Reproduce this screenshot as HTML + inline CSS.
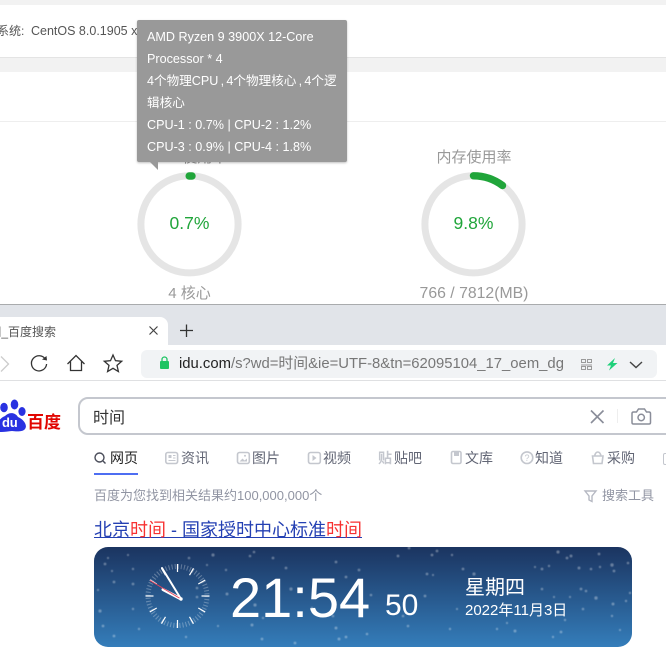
<!DOCTYPE html>
<html>
<head>
<meta charset="utf-8">
<style>
html,body{margin:0;padding:0;background:#fff}
body{width:666px;height:658px;position:relative;overflow:hidden;font-family:"Liberation Sans","Noto Sans CJK SC",sans-serif}
.a{position:absolute}
.t{position:absolute;white-space:nowrap;line-height:20px}
svg{position:absolute;overflow:visible}
.nav{position:absolute;top:448px;line-height:20px;font-size:14px;color:#626675;white-space:nowrap}
</style>
</head>
<body>
<div class="a" style="left:0;top:0;width:666px;height:5px;background:#f2f2f2"></div>
<div class="a" style="left:0;top:57px;width:666px;height:15px;background:#f2f2f2;border-top:1px solid #e4e4e4;box-sizing:border-box"></div>
<div class="a" style="left:0;top:121px;width:666px;height:1px;background:#eee"></div>
<div class="t" style="left:-3px;top:21px;font-size:12px;color:#555">系统:</div>
<div class="t" style="left:31px;top:21px;font-size:12.5px;color:#555">CentOS 8.0.1905 x86</div>

<div class="t" style="left:89px;top:148px;width:200px;text-align:center;font-size:15px;color:#999">CPU使用率</div>
<div class="t" style="left:374px;top:148px;width:200px;text-align:center;font-size:15px;color:#999">内存使用率</div>

<svg style="left:0;top:0" width="666" height="320">
<circle cx="189.5" cy="224.3" r="48.6" fill="none" stroke="#e5e5e5" stroke-width="7"/>
<circle cx="473.5" cy="224.3" r="48.6" fill="none" stroke="#e5e5e5" stroke-width="7"/>
<path d="M189.2 176 L192 176" fill="none" stroke="#20a53a" stroke-width="7.4" stroke-linecap="round"/>
<path d="M473.5 175.8 A48.6 48.6 0 0 1 502.5 185.5" fill="none" stroke="#20a53a" stroke-width="7.4" stroke-linecap="round"/>
</svg>
<div class="t" style="left:89.5px;top:213px;width:200px;text-align:center;font-size:17.5px;color:#20a53a">0.7%</div>
<div class="t" style="left:373.5px;top:213px;width:200px;text-align:center;font-size:17.5px;color:#20a53a">9.8%</div>
<div class="t" style="left:89.5px;top:284px;width:200px;text-align:center;font-size:15px;color:#999">4 核心</div>
<div class="t" style="left:374px;top:284px;width:200px;text-align:center;font-size:15.8px;color:#999">766 / 7812(MB)</div>

<div class="a" style="left:137px;top:20px;width:210px;height:142px;background:#999;border-radius:2px;box-shadow:0 1px 2px rgba(0,0,0,.25)"></div>
<svg style="left:0;top:0" width="200" height="200"><path d="M150 162 L158 162 L158 170 Z" fill="#999"/></svg>
<div class="t" style="left:147px;top:26px;font-size:12.6px;line-height:22px;color:#fff">AMD Ryzen 9 3900X 12-Core<br>Processor * 4<br><span style="word-spacing:-1.25px">4个物理CPU , 4个物理核心 , 4个逻</span><br>辑核心<br>CPU-1 : 0.7% | CPU-2 : 1.2%<br>CPU-3 : 0.9% | CPU-4 : 1.8%</div>

<!-- browser -->
<div class="a" style="left:0;top:304px;width:666px;height:1px;background:#a9abad"></div>
<div class="a" style="left:0;top:305px;width:666px;height:40px;background:#e1e4e9"></div>
<div class="a" style="left:0;top:317px;width:168px;height:28px;background:#fff;border-top-right-radius:8px"></div>
<div class="t" style="right:610px;top:322px;font-size:12px;color:#555">时间_百度搜索</div>
<svg style="left:0;top:0" width="666" height="400">
<path d="M149.5 326.5 L157.5 334.5 M157.5 326.5 L149.5 334.5" stroke="#444" stroke-width="1.2" fill="none"/>
<path d="M180 330.5 H193 M186.5 324.5 V337" stroke="#333" stroke-width="1.3" fill="none"/>
<path d="M1 356.5 L8.5 364 L1 371.5" stroke="#ccc" stroke-width="1.3" fill="none"/>
<path d="M45.6 359.5 A7.6 7.6 0 1 0 46.6 364" stroke="#333" stroke-width="1.3" fill="none"/>
<path d="M42 359.5 L47 360.5 L46.5 356 Z" fill="#333"/>
<path d="M67.5 364 L76 355.5 L84.5 364 M70.5 361.5 V370.5 H81.5 V361.5" stroke="#333" stroke-width="1.3" fill="none"/>
<path d="M113 355 L115.5 360.7 L121.7 361.3 L117 365.4 L118.4 371.5 L113 368.3 L107.6 371.5 L109 365.4 L104.3 361.3 L110.5 360.7 Z" stroke="#333" stroke-width="1.3" fill="none"/>
</svg>
<div class="a" style="left:141px;top:350px;width:516px;height:28px;background:#f1f3f5;border-radius:6px"></div>
<div class="a" style="left:0;top:380px;width:666px;height:1px;background:#dfe0e2"></div>
<svg style="left:0;top:0" width="666" height="400">
<rect x="160" y="361" width="9" height="8" rx="1" fill="#1ec463"/>
<path d="M162 361.5 V359.5 A2.5 2.5 0 0 1 167 359.5 V361.5" stroke="#1ec463" stroke-width="1.3" fill="none"/>
<g fill="none" stroke="#9a9a9a" stroke-width="1">
<rect x="581.5" y="359.5" width="4" height="3"/><rect x="587.5" y="359.5" width="4" height="3"/>
<path d="M581 365 H592"/>
<rect x="581.5" y="366.5" width="4" height="3"/><rect x="587.5" y="366.5" width="4" height="3"/>
</g>
<path d="M615 358 L607 365.5 L611 365.5 L609 370.5 L617.5 363 L613 363 Z" fill="#1fd07a"/>
<path d="M630 362 L636 367.5 L642 362" stroke="#444" stroke-width="1.4" fill="none"/>
</svg>
<div class="t" style="left:179px;top:354px;font-size:14.85px;color:#777"><span style="color:#222">idu.com</span>/s?wd=时间&amp;ie=UTF-8&amp;tn=62095104_17_oem_dg</div>

<!-- baidu logo -->
<svg style="left:0;top:0" width="70" height="440">
<g fill="#2932e1">
<ellipse cx="4" cy="407.500" rx="3.800" ry="4.800"/>
<ellipse cx="14.500" cy="404.500" rx="3.800" ry="5"/>
<ellipse cx="22" cy="411.500" rx="3.600" ry="4.500"/>
<path d="M-3 431 C-5 424 0 418 5 416 C9 412 15 412 18 417 C23 419 28 425 25 429 C23 432 16 431.500 12 431 C7 431.500 -1 433 -3 431 Z"/>
</g>
</svg>
<div class="t" style="left:2px;top:413px;font-size:13px;font-weight:bold;color:#fff;letter-spacing:-.2px">du</div>
<div class="t" style="left:27px;top:411px;font-size:17px;font-weight:bold;color:#e10601;font-family:'Noto Sans CJK SC',sans-serif">百度</div>

<!-- search box -->
<div class="a" style="left:78px;top:397px;width:640px;height:38px;border:2px solid #c4c7ce;border-radius:10px;box-sizing:border-box;background:#fff"></div>
<div class="t" style="left:93px;top:409px;font-size:16px;color:#333">时间</div>
<svg style="left:0;top:0" width="666" height="480">
<path d="M591 410.5 L603.5 423 M603.5 410.5 L591 423" stroke="#8a8d99" stroke-width="1.6" fill="none"/>
<path d="M617.5 409 V423" stroke="#eee" stroke-width="1"/>
<path d="M633.5 412 H636.5 L638.5 409 H644.5 L646.5 412 H649 Q650.5 412 650.5 413.5 V422.5 Q650.5 424 649 424 H633.5 Q632 424 632 422.5 V413.5 Q632 412 633.5 412 Z" stroke="#8a8d99" stroke-width="1.5" fill="none"/>
<circle cx="641.2" cy="417.5" r="3.2" stroke="#8a8d99" stroke-width="1.5" fill="none"/>

<!-- nav icons -->
<circle cx="99.5" cy="457.5" r="4.5" stroke="#4a4d5a" stroke-width="1.4" fill="none"/>
<path d="M103 461 L105.500 463.500" stroke="#4a4d5a" stroke-width="1.4"/>
<g stroke="#c4c7ce" stroke-width="1.6" fill="none">
<rect x="165.800" y="452.500" width="11.800" height="11" rx="2"/>
<path d="M173 455.500 H175.500 M173 458 H175.500 M168.500 460.500 H175.500" stroke-width="1"/>
<rect x="237.500" y="452.500" width="11.800" height="11" rx="2"/>
<rect x="308.500" y="452.500" width="11.800" height="11" rx="2"/>
<rect x="451.500" y="451.500" width="9.500" height="12" rx="1.500"/>
<circle cx="527" cy="457.700" r="5.800"/>
<path d="M592.500 456 H603 L602 463.500 H593.500 Z M594.800 456 A3 4 0 0 1 600.800 456"/>
</g>
<rect x="168.500" y="455" width="3" height="3" fill="#c4c7ce"/>
<path d="M239.500 461.500 L242.500 458.500 L244.500 460.500 L247 458.500 V461.500 Z" fill="#c4c7ce"/>
<circle cx="245" cy="455.800" r="1" fill="#c4c7ce"/>
<path d="M312.500 455 L316.500 458 L312.500 461 Z" fill="#c4c7ce"/>
<path d="M454 452 H459 V456 H454 Z" fill="#c4c7ce"/>
<text x="527" y="461" font-size="9" text-anchor="middle" fill="#c4c7ce" font-family="Liberation Sans">?</text>
<path d="M585 491 H596 L592 496 V501.500 L589 500 V496 Z" stroke="#b5b8c2" stroke-width="1.4" fill="none"/>
</svg>
<div class="t" style="left:378px;top:448px;font-size:14px;color:#c4c7ce;font-weight:bold">贴</div>
<div class="nav" style="left:110px;color:#222">网页</div>
<div class="nav" style="left:181px">资讯</div>
<div class="nav" style="left:252px">图片</div>
<div class="nav" style="left:323px">视频</div>
<div class="nav" style="left:394px">贴吧</div>
<div class="nav" style="left:465px">文库</div>
<div class="nav" style="left:535px">知道</div>
<div class="nav" style="left:607px">采购</div>
<div class="a" style="left:663px;top:453px;width:8px;height:10px;border:1.4px solid #c4c7ce;border-radius:2px"></div>
<div class="a" style="left:94px;top:473px;width:44px;height:2px;background:#4e6ef2"></div>
<div class="t" style="left:94px;top:486px;font-size:13px;color:#9195a3">百度为您找到相关结果约100,000,000个</div>
<div class="t" style="left:602px;top:486px;font-size:13px;color:#9195a3">搜索工具</div>
<div class="t" style="left:94px;top:519px;font-size:18px;line-height:22px;color:#2440b3;text-decoration:underline;text-decoration-thickness:1px;text-underline-offset:1px">北京<span style="color:#f73131">时间</span> - 国家授时中心标准<span style="color:#f73131">时间</span></div>

<!-- time card -->
<div class="a" style="left:94px;top:547px;width:538px;height:100px;border-radius:14px;background:linear-gradient(#1b3460,#347dba)"></div>
<svg style="left:0;top:0" width="666" height="658">
<defs><filter id="b" x="-5%" y="-5%" width="110%" height="110%"><feGaussianBlur stdDeviation="0.5"/></filter></defs>
<g fill="#fff" opacity=".32" filter="url(#b)">
<circle cx="213" cy="555" r="1.6"/><circle cx="189" cy="558" r="1.3"/><circle cx="254" cy="552" r="1.3"/><circle cx="250" cy="556" r="1.3"/><circle cx="105" cy="564" r="1.4"/><circle cx="133" cy="569" r="1.2"/><circle cx="114" cy="582" r="1.4"/><circle cx="133" cy="584" r="1.4"/><circle cx="100" cy="611" r="1.6"/><circle cx="103" cy="626" r="1.4"/><circle cx="114" cy="636" r="1.4"/><circle cx="133" cy="609" r="1.2"/><circle cx="139" cy="629" r="1.2"/><circle cx="226" cy="570" r="1.2"/><circle cx="286" cy="568" r="1.4"/><circle cx="336" cy="562" r="1.4"/><circle cx="359" cy="570" r="1.4"/><circle cx="346" cy="577" r="1.4"/><circle cx="273" cy="558" r="1.4"/><circle cx="227" cy="594" r="1.5"/><circle cx="255" cy="605" r="1.6"/><circle cx="291" cy="589" r="1.6"/><circle cx="263" cy="618" r="1.2"/><circle cx="312" cy="608" r="1.3"/><circle cx="333" cy="616" r="1.3"/><circle cx="371" cy="595" r="1.3"/><circle cx="252" cy="625" r="1.5"/><circle cx="336" cy="628" r="1.5"/><circle cx="346" cy="637" r="1.4"/><circle cx="339" cy="639" r="1.5"/><circle cx="367" cy="634" r="1.3"/><circle cx="262" cy="639" r="1.4"/><circle cx="295" cy="643" r="1.4"/><circle cx="186" cy="637" r="1.2"/><circle cx="197" cy="588" r="1.3"/><circle cx="197" cy="597" r="1.3"/><circle cx="207" cy="565" r="1.1"/><circle cx="108" cy="558" r="1.1"/><circle cx="128" cy="555" r="1.1"/><circle cx="112" cy="571" r="1.1"/><circle cx="98" cy="590" r="1.1"/><circle cx="218" cy="626" r="1.1"/>
<circle cx="398" cy="556" r="1.4"/><circle cx="432" cy="555" r="1.4"/><circle cx="437" cy="551" r="1.4"/><circle cx="452" cy="555" r="1.2"/><circle cx="409" cy="548" r="1.4"/><circle cx="463" cy="569" r="1.4"/><circle cx="474" cy="574" r="1.6"/><circle cx="427" cy="574" r="1.4"/><circle cx="433" cy="575" r="1.1"/><circle cx="425" cy="596" r="1.4"/><circle cx="558" cy="552" r="1.6"/><circle cx="571" cy="556" r="1.5"/><circle cx="567" cy="558" r="1.4"/><circle cx="599" cy="554" r="1.4"/><circle cx="612" cy="565" r="1.7"/><circle cx="628" cy="563" r="1.3"/><circle cx="614" cy="571" r="1.4"/><circle cx="579" cy="568" r="1.5"/><circle cx="591" cy="569" r="1.3"/><circle cx="600" cy="567" r="1.2"/><circle cx="542" cy="569" r="1.4"/><circle cx="535" cy="567" r="1.1"/><circle cx="549" cy="566" r="1.2"/><circle cx="542" cy="589" r="1.3"/><circle cx="581" cy="589" r="1.4"/><circle cx="586" cy="591" r="1.3"/><circle cx="596" cy="598" r="1.7"/><circle cx="613" cy="604" r="1.5"/><circle cx="626" cy="601" r="1.2"/><circle cx="630" cy="593" r="1.2"/><circle cx="583" cy="609" r="1.3"/><circle cx="570" cy="597" r="1.1"/><circle cx="554" cy="597" r="1.1"/><circle cx="565" cy="620" r="1.2"/><circle cx="612" cy="616" r="1.2"/><circle cx="620" cy="630" r="1.1"/><circle cx="561" cy="632" r="1.4"/><circle cx="553" cy="637" r="1.2"/><circle cx="515" cy="631" r="1.5"/><circle cx="497" cy="629" r="1.2"/><circle cx="450" cy="629" r="1.2"/><circle cx="408" cy="626" r="1.3"/><circle cx="403" cy="616" r="1.3"/><circle cx="507" cy="623" r="1.1"/><circle cx="457" cy="609" r="1.1"/>
</g>
<circle cx="177.500" cy="596" r="29.500" fill="none" stroke="#fff" stroke-opacity=".28" stroke-width="5" stroke-dasharray="1.1 1.99"/>
<g stroke="#fff" stroke-width="1.2">
<line x1="177.500" y1="564" x2="177.500" y2="572"/>
<line x1="177.500" y1="564" x2="177.500" y2="572" transform="rotate(30 177.500 596)"/>
<line x1="177.500" y1="564" x2="177.500" y2="572" transform="rotate(60 177.500 596)"/>
<line x1="177.500" y1="564" x2="177.500" y2="572" transform="rotate(90 177.500 596)"/>
<line x1="177.500" y1="564" x2="177.500" y2="572" transform="rotate(120 177.500 596)"/>
<line x1="177.500" y1="564" x2="177.500" y2="572" transform="rotate(150 177.500 596)"/>
<line x1="177.500" y1="564" x2="177.500" y2="572" transform="rotate(180 177.500 596)"/>
<line x1="177.500" y1="564" x2="177.500" y2="572" transform="rotate(210 177.500 596)"/>
<line x1="177.500" y1="564" x2="177.500" y2="572" transform="rotate(240 177.500 596)"/>
<line x1="177.500" y1="564" x2="177.500" y2="572" transform="rotate(270 177.500 596)"/>
<line x1="177.500" y1="564" x2="177.500" y2="572" transform="rotate(300 177.500 596)"/>
<line x1="177.500" y1="564" x2="177.500" y2="572" transform="rotate(330 177.500 596)"/>
</g>
<path d="M181 599 L162 568" stroke="#fff" stroke-width="2" stroke-linecap="round"/>
<path d="M181 599 L163 589.500" stroke="#fff" stroke-width="3" stroke-linecap="round"/>
<path d="M181 599 L150 580.500" stroke="#e8425a" stroke-width="1"/>
<circle cx="181" cy="599" r="1.700" fill="#fff"/>
</svg>
<div class="t" style="left:230px;top:566px;font-size:56px;line-height:64px;color:#fff">21:54</div>
<div class="t" style="left:385px;top:588px;font-size:30px;line-height:36px;color:#fff">50</div>
<div class="t" style="left:465px;top:575px;font-size:20px;line-height:26px;color:#fff">星期四</div>
<div class="t" style="left:465px;top:601px;font-size:15px;line-height:20px;color:#fff">2022年11月3日</div>
</body>
</html>
